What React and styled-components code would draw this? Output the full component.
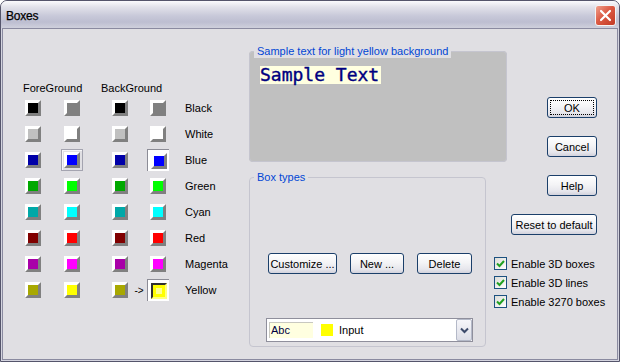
import React from 'react'
import styled, { createGlobalStyle, css } from 'styled-components'

const GlobalStyle = createGlobalStyle`
  html, body {
    margin: 0;
    padding: 0;
    background: #ffffff;
  }
  body {
    font-family: "Liberation Sans", Arial, sans-serif;
    font-size: 11px;
    color: #000;
  }
`

const Window = styled.div`
  width: 620px;
  height: 362px;
  box-sizing: border-box;
  display: flex;
  flex-direction: column;
  background: #d4d4df;
  border: 1px solid #55556b;
  border-radius: 7px 7px 0 0;
  overflow: hidden;
`

const TitleBar = styled.div`
  height: 27px;
  flex: none;
  display: flex;
  align-items: center;
  justify-content: space-between;
  padding: 0 3px 0 5px;
  background: linear-gradient(180deg, #fbfbfd 0%, #e2e2ea 22%, #c8c9d9 55%, #bdbed1 78%, #cfd0dc 100%);
`

const Title = styled.span`
  font-size: 12px;
  color: #000;
  letter-spacing: -0.2px;
  padding-top: 2px;
  -webkit-text-stroke: 0.25px #000;
`

const CloseButton = styled.div`
  width: 21px;
  height: 21px;
  box-sizing: border-box;
  border: 1px solid #f4f4f4;
  border-radius: 3px;
  background: linear-gradient(135deg, #f0a08c 0%, #dc5a44 45%, #c23a25 100%);
  display: flex;
  align-items: center;
  justify-content: center;
  margin-top: 2px;
`

const Body = styled.div`
  flex: 1;
  margin: 0 1px 1px;
  background: #e0dfe3;
  border: 1px solid #8a8aa0;
  display: flex;
`

/* left: colour table */
const ColorPanel = styled.div`
  width: 246px;
  box-sizing: border-box;
  padding: 52px 0 0 19px;
`

const HeaderRow = styled.div`
  display: flex;
  height: 14px;
  line-height: 14px;
  padding-left: 1px;
`

const HeaderCell = styled.span`
  width: ${p => p.w}px;
`

const ColorGrid = styled.div`
  display: grid;
  grid-template-columns: 22px 39px 48px 16px 22px 1fr;
  grid-auto-rows: 26px;
  align-items: center;
  justify-items: end;
`

const Slot = styled.div`
  width: 22px;
  height: 22px;
  box-sizing: border-box;
  display: flex;
  align-items: center;
  justify-content: center;
  ${p => p.frame === 'fg' && css`
    border: 1px solid #a4a4b0;
    box-shadow: inset 1px 1px 0 #f6f6f8;
  `}
  ${p => p.frame === 'bg' && css`
    background: #fff;
    border-top: 1px solid #8c8c96;
    border-left: 1px solid #8c8c96;
  `}
`

const Swatch = styled.div`
  width: 16px;
  height: 16px;
  box-sizing: border-box;
  border: 3px solid;
  border-color: #ffffff #808080 #808080 #ffffff;
  background: ${p => p.color};
  ${p => p.pressed && css`
    border-width: 2px;
    border-color: #303030 #ffff80 #ffff80 #303030;
    box-shadow: inset 0 0 0 3px ${p.color};
    background: #ffff90;
  `}
`

const Arrow = styled.span`
  justify-self: center;
  font-size: 10px;
`

const ColorName = styled.span`
  justify-self: start;
  padding-left: 16px;
`

/* middle: group boxes */
const MiddleColumn = styled.div`
  width: 245px;
  padding-top: 16px;
  display: flex;
  flex-direction: column;
  gap: 9px;
`

const Group = styled.fieldset`
  margin: 0;
  width: ${p => p.w}px;
  box-sizing: border-box;
  border: 1px solid #c5c5cf;
  border-radius: 4px;
  padding: 0;
  background: ${p => p.fill || 'transparent'};
`

const Legend = styled.legend`
  color: #0046d5;
  line-height: 13px;
  padding: 0 3px;
  margin-left: 4px;
  background: #e0dfe3;
`

const SampleArea = styled.div`
  height: 103px;
  padding: 8px 0 0 10px;
  box-sizing: border-box;
`

const SampleText = styled.span`
  display: inline-block;
  font-family: "DejaVu Sans Mono", "Liberation Mono", monospace;
  font-size: 18px;
  line-height: 18px;
  color: #000080;
  background: #ffffe0;
  padding-right: 2px;
  -webkit-text-stroke: 0.4px #000080;
`

const BoxTypesArea = styled.div`
  padding: 69px 0 4px 16px;
`

const ButtonRow = styled.div`
  display: flex;
  gap: 13px;
  padding-left: 2px;
`

const Button = styled.button`
  width: ${p => p.w}px;
  height: 21px;
  box-sizing: border-box;
  padding: 0;
  font-family: "Liberation Sans", Arial, sans-serif;
  font-size: 11px;
  color: #000;
  border: 1px solid #1b3f6a;
  border-radius: 3px;
  background: linear-gradient(180deg, #ffffff 0%, #f4f4f6 45%, #e6e6ec 80%, #d2d2dc 100%);
  ${p => p.focused && css`
    outline: 1px dotted #000;
    outline-offset: -4px;
  `}
`

const Combo = styled.div`
  margin-top: 44px;
  width: 207px;
  height: 24px;
  box-sizing: border-box;
  border: 1px solid #8f8f9c;
  background: #fff;
  display: flex;
  align-items: center;
  padding-left: 2px;
`

const AbcField = styled.div`
  width: 44px;
  height: 16px;
  box-sizing: border-box;
  background: #ffffe0;
  border-top: 1px solid #c8c8c0;
  border-left: 1px solid #c8c8c0;
  line-height: 15px;
  color: #000040;
  padding-left: 1px;
`

const ColorDot = styled.div`
  width: 12px;
  height: 12px;
  margin: 0 6px 0 8px;
  background: #ffff00;
`

const ComboText = styled.span`
  flex: 1;
`

const DropButton = styled.div`
  width: 16px;
  height: 22px;
  box-sizing: border-box;
  border: 1px solid #b4b9c8;
  border-radius: 2px;
  background: linear-gradient(180deg, #f6f6fa, #dcdde6);
  display: flex;
  align-items: center;
  justify-content: center;
`

/* right: buttons + options */
const RightColumn = styled.div`
  flex: 1;
  display: flex;
  flex-direction: column;
`

const ActionButtons = styled.div`
  display: flex;
  flex-direction: column;
  align-items: flex-end;
  gap: 18px;
  padding: 68px 20px 0 0;
`

const Options = styled.div`
  margin-top: 19px;
  display: flex;
  flex-direction: column;
`

const Option = styled.label`
  display: flex;
  align-items: center;
  gap: 4px;
  height: 19px;
`

const CheckBox = styled.span`
  width: 13px;
  height: 13px;
  box-sizing: border-box;
  border: 1px solid #1c5180;
  background: linear-gradient(135deg, #dcdcd7, #ffffff);
  display: flex;
  align-items: center;
  justify-content: center;
`

const colors = [
  { name: 'Black', dark: '#000000', light: '#808080' },
  { name: 'White', dark: '#c0c0c0', light: '#ffffff' },
  { name: 'Blue', dark: '#0000a8', light: '#0000ff', fgSel: true, bgSel: true },
  { name: 'Green', dark: '#00a800', light: '#00ff00' },
  { name: 'Cyan', dark: '#00a8a8', light: '#00ffff' },
  { name: 'Red', dark: '#800000', light: '#ff0000' },
  { name: 'Magenta', dark: '#a800a8', light: '#ff00ff' },
  { name: 'Yellow', dark: '#a8a800', light: '#ffff00', arrow: true, bgSel: true, pressed: true },
]

const options = ['Enable 3D boxes', 'Enable 3D lines', 'Enable 3270 boxes']

const CheckMark = () => (
  <svg width="9" height="9" viewBox="0 0 9 9">
    <polyline points="1,4.5 3.5,7 8,2" fill="none" stroke="#21a121" strokeWidth="2" />
  </svg>
)

export default function App() {
  return (
    <>
      <GlobalStyle />
      <Window>
        <TitleBar>
          <Title>Boxes</Title>
          <CloseButton>
            <svg width="13" height="13" viewBox="0 0 13 13">
              <path d="M2 2 L11 11 M11 2 L2 11" stroke="#fff" strokeWidth="2.2" strokeLinecap="round" />
            </svg>
          </CloseButton>
        </TitleBar>
        <Body>
          <ColorPanel>
            <HeaderRow>
              <HeaderCell w={78}>ForeGround</HeaderCell>
              <HeaderCell w={80}>BackGround</HeaderCell>
            </HeaderRow>
            <ColorGrid>
              {colors.map(c => (
                <React.Fragment key={c.name}>
                  <Slot><Swatch color={c.dark} /></Slot>
                  <Slot frame={c.fgSel ? 'fg' : undefined}><Swatch color={c.light} /></Slot>
                  <Slot><Swatch color={c.dark} /></Slot>
                  <Arrow>{c.arrow ? '->' : ''}</Arrow>
                  <Slot frame={c.bgSel ? 'bg' : undefined}><Swatch color={c.light} pressed={c.pressed} /></Slot>
                  <ColorName>{c.name}</ColorName>
                </React.Fragment>
              ))}
            </ColorGrid>
          </ColorPanel>

          <MiddleColumn>
            <Group w={258} fill="#c0c0c0">
              <Legend>Sample text for light yellow background</Legend>
              <SampleArea>
                <SampleText>Sample Text</SampleText>
              </SampleArea>
            </Group>
            <Group w={237}>
              <Legend>Box types</Legend>
              <BoxTypesArea>
                <ButtonRow>
                  <Button w={69}>Customize ...</Button>
                  <Button w={54}>New ...</Button>
                  <Button w={55}>Delete</Button>
                </ButtonRow>
                <Combo>
                  <AbcField>Abc</AbcField>
                  <ColorDot />
                  <ComboText>Input</ComboText>
                  <DropButton>
                    <svg width="9" height="7" viewBox="0 0 9 7">
                      <path d="M1 1.5 L4.5 5 L8 1.5" fill="none" stroke="#3c4a6a" strokeWidth="2" />
                    </svg>
                  </DropButton>
                </Combo>
              </BoxTypesArea>
            </Group>
          </MiddleColumn>

          <RightColumn>
            <ActionButtons>
              <Button w={50} focused>OK</Button>
              <Button w={50}>Cancel</Button>
              <Button w={50}>Help</Button>
              <Button w={86}>Reset to default</Button>
            </ActionButtons>
            <Options>
              {options.map(o => (
                <Option key={o}>
                  <CheckBox><CheckMark /></CheckBox>
                  {o}
                </Option>
              ))}
            </Options>
          </RightColumn>
        </Body>
      </Window>
    </>
  )
}
